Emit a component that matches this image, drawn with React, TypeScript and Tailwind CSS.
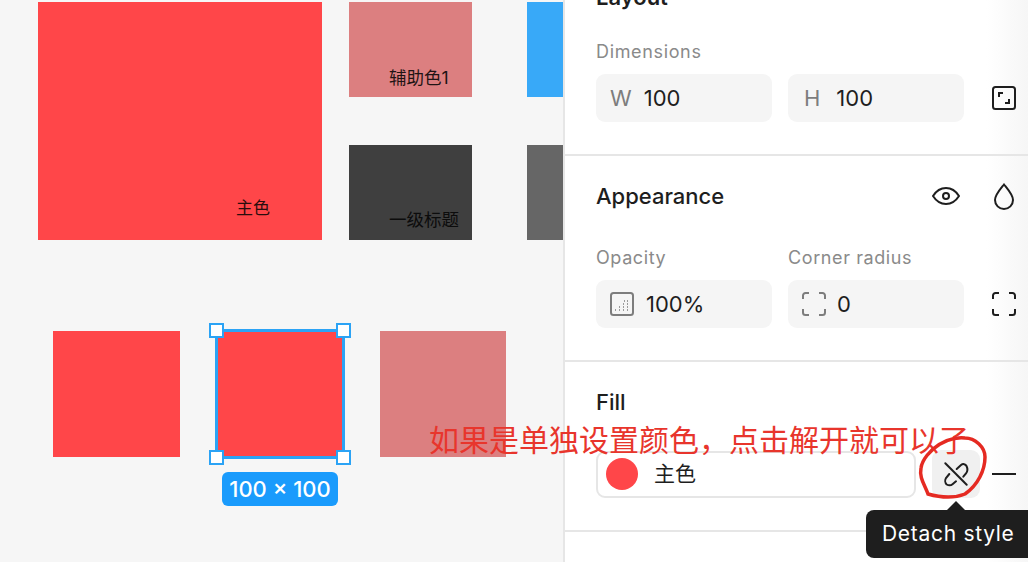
import type { ReactNode } from 'react';

const FONT = "font-['Inter','Noto_Sans_CJK_SC',sans-serif]";

function Swatch({ className, children }: { className: string; children?: ReactNode }) {
  return <div className={`absolute ${className}`}>{children}</div>;
}

function Handle({ className }: { className: string }) {
  return <div className={`absolute h-[15px] w-[15px] border-[2px] border-[#2ba3f5] bg-white ${className}`} />;
}

function Canvas() {
  return (
    <div className="relative h-full w-[563px] shrink-0 bg-[#f6f6f6]">
      <Swatch className="left-[38px] top-[2px] h-[238px] w-[284px] bg-[#ff4649]" />
      <span className="absolute left-[236px] top-[196px] text-[17px] leading-6 text-[#2a0d0d]">主色</span>

      <Swatch className="left-[349px] top-[2px] h-[95px] w-[123px] bg-[#dc7f80]" />
      <span className="absolute left-[389px] top-[66px] text-[17.5px] leading-6 text-[#1f1414]">辅助色1</span>
      <Swatch className="left-[527px] top-[2px] h-[95px] w-[36px] bg-[#38a9f8]" />

      <Swatch className="left-[349px] top-[145px] h-[95px] w-[123px] bg-[#3f3f3f]" />
      <span className="absolute left-[389px] top-[208px] text-[17.5px] leading-6 text-[#0c0c0c]">一级标题</span>
      <Swatch className="left-[527px] top-[145px] h-[95px] w-[36px] bg-[#666666]" />

      <Swatch className="left-[53px] top-[331px] h-[126px] w-[127px] bg-[#ff4649]" />
      <Swatch className="left-[215px] top-[329px] h-[130px] w-[130px] border-[3px] border-[#2ba3f5] bg-[#ff4649]" />
      <Handle className="left-[209px] top-[323px]" />
      <Handle className="left-[336px] top-[323px]" />
      <Handle className="left-[209px] top-[450px]" />
      <Handle className="left-[336px] top-[450px]" />
      <Swatch className="left-[380px] top-[331px] h-[126px] w-[126px] bg-[#dc7f80]" />

      <div className="absolute left-[222px] top-[472px] flex h-[34px] w-[116px] items-center justify-center rounded-[6px] bg-[#1a9bfc] text-[22px] font-medium text-white">
        100 × 100
      </div>
    </div>
  );
}

function Field({ prefix, value, className = '' }: { prefix: ReactNode; value: string; className?: string }) {
  return (
    <div className={`flex h-12 w-[176px] items-center rounded-[9px] bg-[#f5f5f5] pl-[14px] text-[22px] text-[#1e1e1e] ${className}`}>
      {prefix}
      <span>{value}</span>
    </div>
  );
}

function CornerIcon({ color = '#1e1e1e' }: { color?: string }) {
  return (
    <svg width="24" height="24" viewBox="0 0 24 24" fill="none" stroke={color} strokeWidth="2">
      <path d="M1 7V3.500A2.500 2.500 0 0 1 3.500 1H7M17 1h3.500A2.500 2.500 0 0 1 23 3.500V7M23 17v3.500a2.500 2.500 0 0 1-2.500 2.500H17M7 23H3.500A2.500 2.500 0 0 1 1 20.500V17" />
    </svg>
  );
}

function Panel() {
  return (
    <div className="h-full flex-1 overflow-hidden border-l-[2px] border-[#e6e6e6] bg-[linear-gradient(90deg,#ffffff_91%,#f6f6f6_100%)]">
      <section className="-mt-[15px] h-[171px] border-b-[2px] border-[#e6e6e6] pl-[31px] pr-[12px]">
        <h2 className="h-[24px] text-[22px] font-semibold leading-[24px] text-[#1e1e1e]">Layout</h2>
        <div className="mt-[31px] text-[18px] leading-6 tracking-[0.65px] text-[#8a8a8a]">Dimensions</div>
        <div className="mt-[10px] flex items-center">
          <Field prefix={<span className="mr-[12px] text-[#7d7d7d]">W</span>} value="100" />
          <Field prefix={<span className="mr-[16px] text-[#7d7d7d]">H</span>} value="100" className="ml-4 pl-[16px]" />
          <svg className="ml-[28px]" width="24" height="24" viewBox="0 0 24 24" fill="none" stroke="#1e1e1e" strokeWidth="2">
            <rect x="1" y="1" width="22" height="22" rx="2.500" />
            <path d="M7 11V7h4M17 13v4h-4" />
          </svg>
        </div>
      </section>

      <section className="h-[206px] border-b-[2px] border-[#e6e6e6] pl-[31px] pr-[12px] pt-[28px]">
        <div className="flex h-6 items-center justify-between pr-px">
          <h2 className="text-[22px] font-medium text-[#1e1e1e]">Appearance</h2>
          <div className="flex items-center gap-[33px]">
            <svg width="28" height="20" viewBox="0 0 28 20" fill="none" stroke="#1e1e1e" strokeWidth="2">
              <path d="M1 10C4.500 4.500 9 2 14 2s9.500 2.500 13 8c-3.500 5.500-8 8-13 8S4.500 15.500 1 10Z" />
              <circle cx="14" cy="10" r="3" />
            </svg>
            <svg width="22" height="27" viewBox="0 0 22 27" fill="none" stroke="#1e1e1e" strokeWidth="2">
              <path d="M11 1.500C7 6.500 2 12 2 17a9 9 0 0 0 18 0c0-5-5-10.500-9-15.500Z" />
            </svg>
          </div>
        </div>
        <div className="mt-[38px] flex text-[18px] leading-6 tracking-[0.6px] text-[#8a8a8a]">
          <span className="w-[192px]">Opacity</span>
          <span>Corner radius</span>
        </div>
        <div className="mt-[10px] flex items-center">
          <Field
            value="100%"
            prefix={
              <svg className="mr-[12px]" width="24" height="24" viewBox="0 0 24 24" fill="none">
                <rect x="1" y="1" width="22" height="22" rx="2.500" stroke="#7d7d7d" strokeWidth="2" />
                <path d="M5 18h1M9 18h1M13 18h1M17 18h1M9 15h1M13 15h1M17 15h1M13 12h1M17 12h1M17 9h1M14 9h1" stroke="#7d7d7d" strokeWidth="1.500" />
              </svg>
            }
          />
          <Field
            value="0"
            className="ml-4 pl-[12px]"
            prefix={
              <span className="mr-[11px] flex">
                <CornerIcon color="#7d7d7d" />
              </span>
            }
          />
          <span className="ml-[28px] flex">
            <CornerIcon />
          </span>
        </div>
      </section>

      <section className="h-[170px] border-b-[2px] border-[#e6e6e6] pl-[31px] pr-[12px] pt-[28px]">
        <h2 className="h-6 text-[22px] font-medium leading-6 text-[#1e1e1e]">Fill</h2>
        <div className="mt-[36px] flex items-center">
          <div className="flex h-[47px] w-[320px] items-center rounded-[9px] border-[2px] border-[#e6e6e6] bg-white pl-[8px] text-[21px] text-[#1e1e1e]">
            <div className="h-[32px] w-[32px] rounded-full bg-[#ff4649]" />
            <span className="ml-[16px]">主色</span>
          </div>
          <div className="ml-4 flex h-12 w-12 items-center justify-center rounded-[9px] bg-[#f0f0f0]">
            <svg width="28" height="28" viewBox="0 0 28 28" fill="none" stroke="#1e1e1e" strokeWidth="2" strokeLinecap="round">
              <path d="M3.300 3.300L24.700 24.700" />
              <path d="M7.300 14L4 18C2.800 20 3 23 4.700 24.500C6.500 25.500 9 25.500 10.500 24.200L14 21.300" />
              <path d="M14.700 9L19 5C21 3.500 23.500 4 24.500 6C25.500 8 25.500 11.500 24 13.500L21.300 16.700" />
            </svg>
          </div>
          <div className="ml-3 h-[2px] w-6 bg-[#1e1e1e]" />
        </div>
      </section>
    </div>
  );
}

export default function App() {
  return (
    <div className={`relative flex h-[562px] w-[1028px] overflow-hidden bg-white ${FONT}`}>
      <Canvas />
      <Panel />

      {/* screenshot annotation on top of the editor */}
      <div className="absolute left-[429px] top-[421px] whitespace-nowrap text-[30px] leading-[38px] text-[#e8352c]">
        如果是单独设置颜色，点击解开就可以了
      </div>
      <svg className="absolute left-[915px] top-[432px]" width="76" height="72" viewBox="915 432 76 72" fill="none" stroke="#e52a22" strokeWidth="3.500" strokeLinecap="round">
        <path d="M933 449C943 441 955 437 965 438C975 438 985 447 985 457C985 470 978 485 965 494C955 498 942 498 928 494C925 485 919 478 921 468C922 460 930 450 940 444" />
      </svg>

      {/* tooltip */}
      <div className="absolute left-[866px] top-[510px] flex h-[48px] w-[170px] items-center rounded-[8px] bg-[#1e1e1e] pl-[16px] text-[21px] tracking-[0.7px] text-white">
        Detach style
        <div className="absolute left-[80px] top-[-9px] h-0 w-0 border-x-[10px] border-b-[10px] border-x-transparent border-b-[#1e1e1e]" />
      </div>
    </div>
  );
}
